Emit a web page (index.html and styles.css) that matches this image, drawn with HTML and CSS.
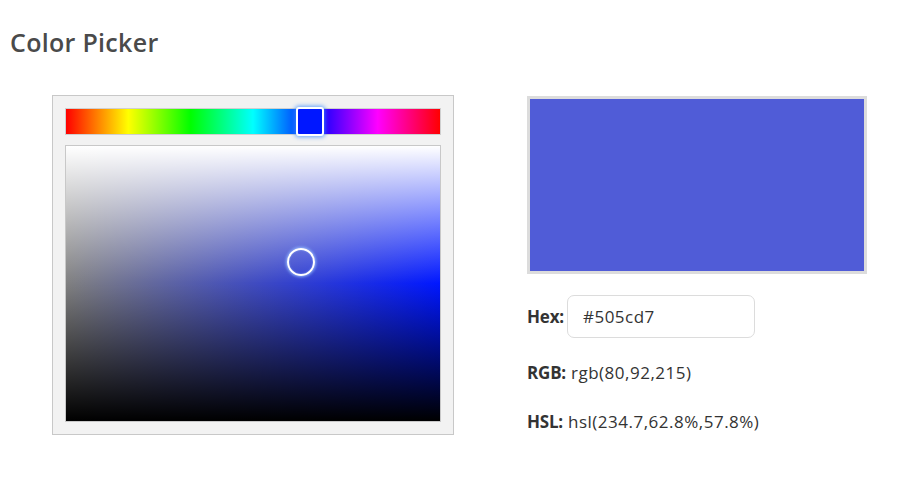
FILE: index.html
```html
<!DOCTYPE html>
<html>
<head>
<meta charset="utf-8">
<link rel="stylesheet" href="styles.css">
</head>
<body>
<h1 class="title">Color Picker</h1>
<div class="main">
  <div class="picker">
    <div class="hue">
      <div class="hue-handle"></div>
    </div>
    <div class="sv">
      <div class="sv-light"></div>
      <div class="sv-handle"></div>
    </div>
  </div>
  <div class="info">
    <div class="swatch"></div>
    <div class="row hex-row">
      <span class="label">Hex:</span>
      <div class="hex-input">#505cd7</div>
    </div>
    <div class="row rgb-row"><span class="label">RGB:</span> rgb(80,92,215)</div>
    <div class="row hsl-row"><span class="label">HSL:</span> hsl(234.7,62.8%,57.8%)</div>
  </div>
</div>
</body>
</html>
```
FILE: styles.css
```css
* { box-sizing: border-box; }
body {
  margin: 0;
  background: #fff;
  font-family: "Open Sans", "Noto Sans", sans-serif;
  color: #333;
}
.title {
  margin: 0;
  padding: 26px 0 0 10px;
  font-size: 25px;
  font-weight: 600;
  color: #4a4a4a;
  line-height: 32px;
  letter-spacing: 0.3px;
}
.main {
  display: flex;
  padding: 37px 0 0 52px;
  gap: 73px;
}
.picker {
  width: 402px;
  height: 340px;
  border: 1px solid #c8c8c8;
  background: #f2f2f2;
  padding: 12px 12px;
}
.hue {
  position: relative;
  height: 27px;
  border: 1px solid #cfcfcf;
  background: linear-gradient(to right, #f00 0%, #ff0 16.67%, #0f0 33.33%, #0ff 50%, #00f 66.67%, #f0f 83.33%, #f00 100%);
}
.hue-handle {
  position: absolute;
  left: 230px;
  top: -2px;
  width: 28px;
  height: 29px;
  background: #0017ff;
  border: 2px solid #fff;
  border-radius: 3px;
  box-shadow: 0 0 4px 1px rgba(60,140,255,0.8);
}
.sv {
  position: relative;
  margin-top: 10px;
  height: 277px;
  border: 1px solid #c8c8c8;
  background: linear-gradient(to right, #808080, #0017ff);
  overflow: hidden;
}
.sv-light {
  position: absolute;
  inset: 0;
  background: linear-gradient(to bottom, #fff 0%, rgba(255,255,255,0) 50%, rgba(0,0,0,0) 50%, #000 100%);
}
.sv-handle {
  position: absolute;
  left: 221px;
  top: 102px;
  width: 28px;
  height: 28px;
  border: 2px solid #fff;
  border-radius: 50%;
  box-shadow: 0 0 3px 1px rgba(150,190,255,0.9), inset 0 0 2px rgba(150,190,255,0.7);
}
.info {
  display: flex;
  flex-direction: column;
  padding-top: 1px;
}
.swatch {
  width: 340px;
  height: 178px;
  border: 3px solid #dcdcdc;
  background: #505cd7;
}
.row {
  font-size: 17px;
  letter-spacing: 0.5px;
  line-height: 22px;
  color: #333;
  display: flex;
  align-items: center;
  gap: 5px;
}
.hex-row {
  margin-top: 21px;
  gap: 3px;
}
.rgb-row { margin-top: 24px; }
.hsl-row { margin-top: 27px; }
.label {
  font-weight: 700;
  letter-spacing: -0.2px;
}
.hex-input {
  width: 188px;
  height: 43px;
  border: 1px solid #dcdcdc;
  border-radius: 7px;
  padding: 0 15px;
  display: flex;
  align-items: center;
}
```
